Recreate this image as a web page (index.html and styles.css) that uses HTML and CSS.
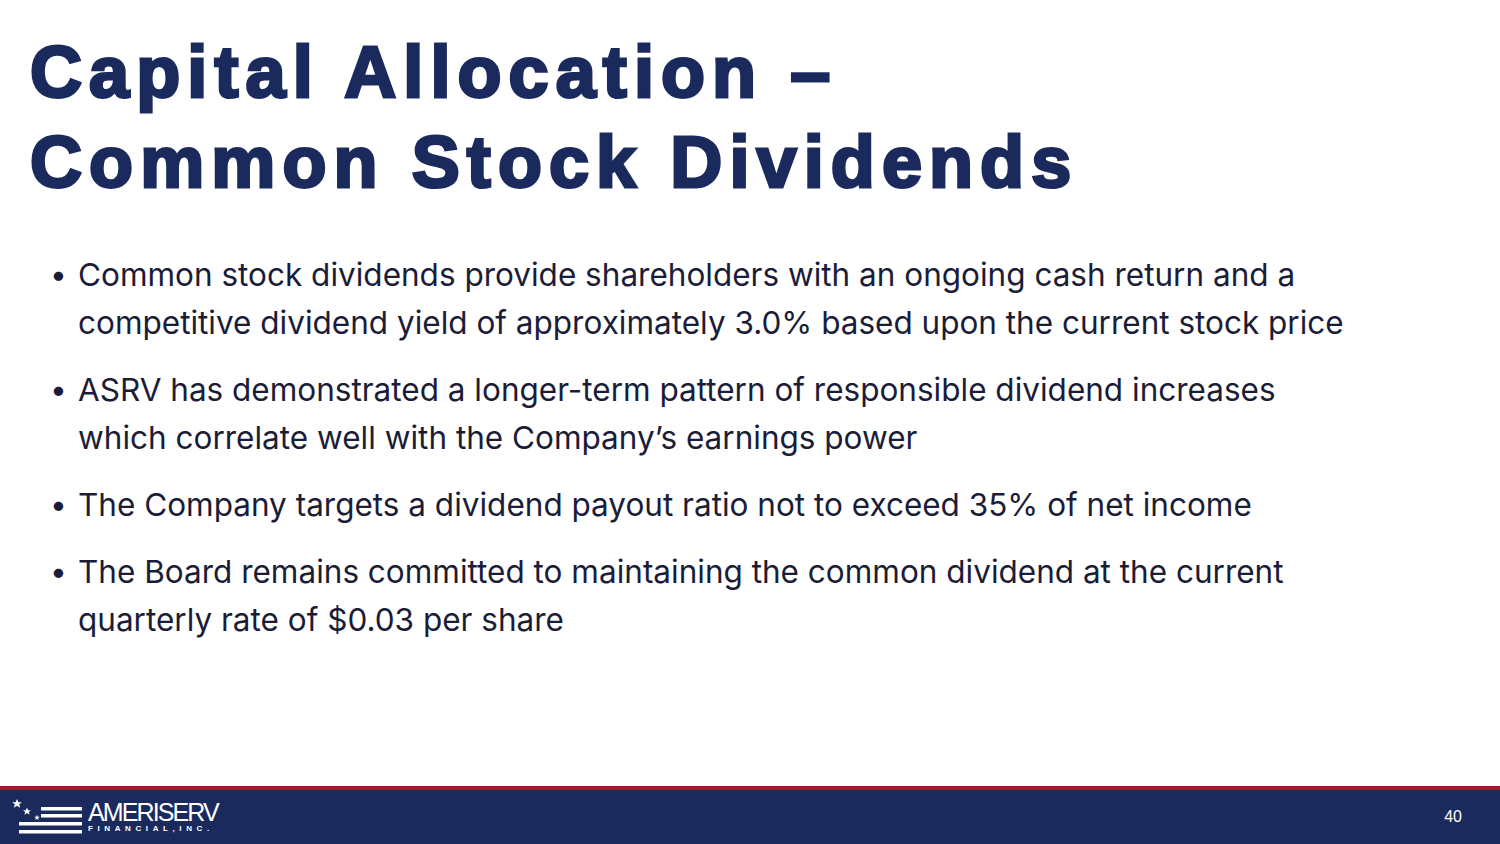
FILE: index.html
```html
<!DOCTYPE html>
<html lang="en">
<head>
<meta charset="utf-8">
<title>Capital Allocation – Common Stock Dividends</title>
<link rel="stylesheet" href="styles.css">
</head>
<body>
<div class="slide">
  <main class="content">
    <h1 class="title">Capital Allocation –<br>Common Stock Dividends</h1>
    <ul class="bullets">
      <li>Common stock dividends provide shareholders with an ongoing cash return and a competitive dividend yield of approximately 3.0% based upon the current stock price</li>
      <li>ASRV has demonstrated a longer-term pattern of responsible dividend increases which correlate well with the Company’s earnings power</li>
      <li>The Company targets a dividend payout ratio not to exceed 35% of net income</li>
      <li>The Board remains committed to maintaining the common dividend at the current quarterly rate of $0.03 per share</li>
    </ul>
  </main>
  <footer class="footer">
    <div class="logo">
      <svg class="flag" width="76" height="40" viewBox="0 0 76 40">
        <polygon points="9,2 10.4,5.3 13.8,5.3 11.1,7.4 12.2,10.8 9,8.8 5.8,10.8 6.9,7.4 4.2,5.3 7.6,5.3" fill="#fff"/>
        <polygon points="19,10.5 20.1,13.2 23,13.2 20.7,14.9 21.6,17.7 19,16.1 16.4,17.7 17.3,14.9 15,13.2 17.9,13.2" fill="#fff"/>
        <polygon points="29,17.8 29.8,19.7 31.8,19.7 30.2,20.9 30.8,22.9 29,21.8 27.2,22.9 27.8,20.9 26.2,19.7 28.2,19.7" fill="#fff"/>
        <rect x="33" y="10" width="41" height="3.5" fill="#fff"/>
        <rect x="33" y="17" width="41" height="3.5" fill="#fff"/>
        <rect x="11" y="25" width="63" height="3.5" fill="#fff"/>
        <rect x="11" y="33" width="63" height="3.5" fill="#fff"/>
      </svg>
      <div class="wordmark">
        <span class="brand">AMERISERV</span>
        <span class="sub">FINANCIAL,INC.</span>
      </div>
    </div>
    <span class="page">40</span>
  </footer>
</div>
</body>
</html>
```
FILE: styles.css
```css
* { box-sizing: border-box; }
html, body { margin: 0; padding: 0; }
body {
  width: 1500px;
  height: 844px;
  background: #ffffff;
  font-family: "Inter", "Liberation Sans", sans-serif;
}
.slide {
  width: 1500px;
  height: 844px;
  display: flex;
  flex-direction: column;
}
.content {
  flex: 1;
  padding: 27px 0 0 30px;
}
.title {
  margin: 0;
  font-family: "Liberation Sans", Arial, sans-serif;
  font-weight: 900;
  font-size: 72px;
  line-height: 90px;
  color: #1b2a5c;
  letter-spacing: 7.1px;
  -webkit-text-stroke: 3px #1b2a5c;
}
.bullets {
  list-style: none;
  margin: 44px 0 0 0;
  padding: 0 0 0 48px;
  color: #1b1d38;
  font-size: 31.5px;
  line-height: 48px;
}
.bullets li {
  position: relative;
  margin-bottom: 19px;
  max-width: 1282px;
}
.bullets li::before {
  content: "•";
  position: absolute;
  left: -28px;
  top: -1px;
  font-size: 30px;
}
.footer {
  height: 58px;
  background: #1b2a5c;
  border-top: 4px solid #a3192a;
  display: flex;
  align-items: center;
  justify-content: space-between;
  padding: 0 38px 0 8px;
}
.logo {
  display: flex;
  align-items: flex-start;
  gap: 4px;
  color: #fff;
}
.wordmark {
  display: flex;
  flex-direction: column;
  padding-top: 4px;
  font-family: "Liberation Sans", Arial, sans-serif;
}
.brand {
  font-size: 25px;
  line-height: 22px;
  letter-spacing: -1.9px;
  font-weight: 400;
}
.sub {
  font-size: 8px;
  letter-spacing: 4.6px;
  line-height: 12px;
  font-weight: 700;
}
.page {
  color: #fff;
  font-family: "Liberation Sans", Arial, sans-serif;
  font-size: 16px;
}
```
